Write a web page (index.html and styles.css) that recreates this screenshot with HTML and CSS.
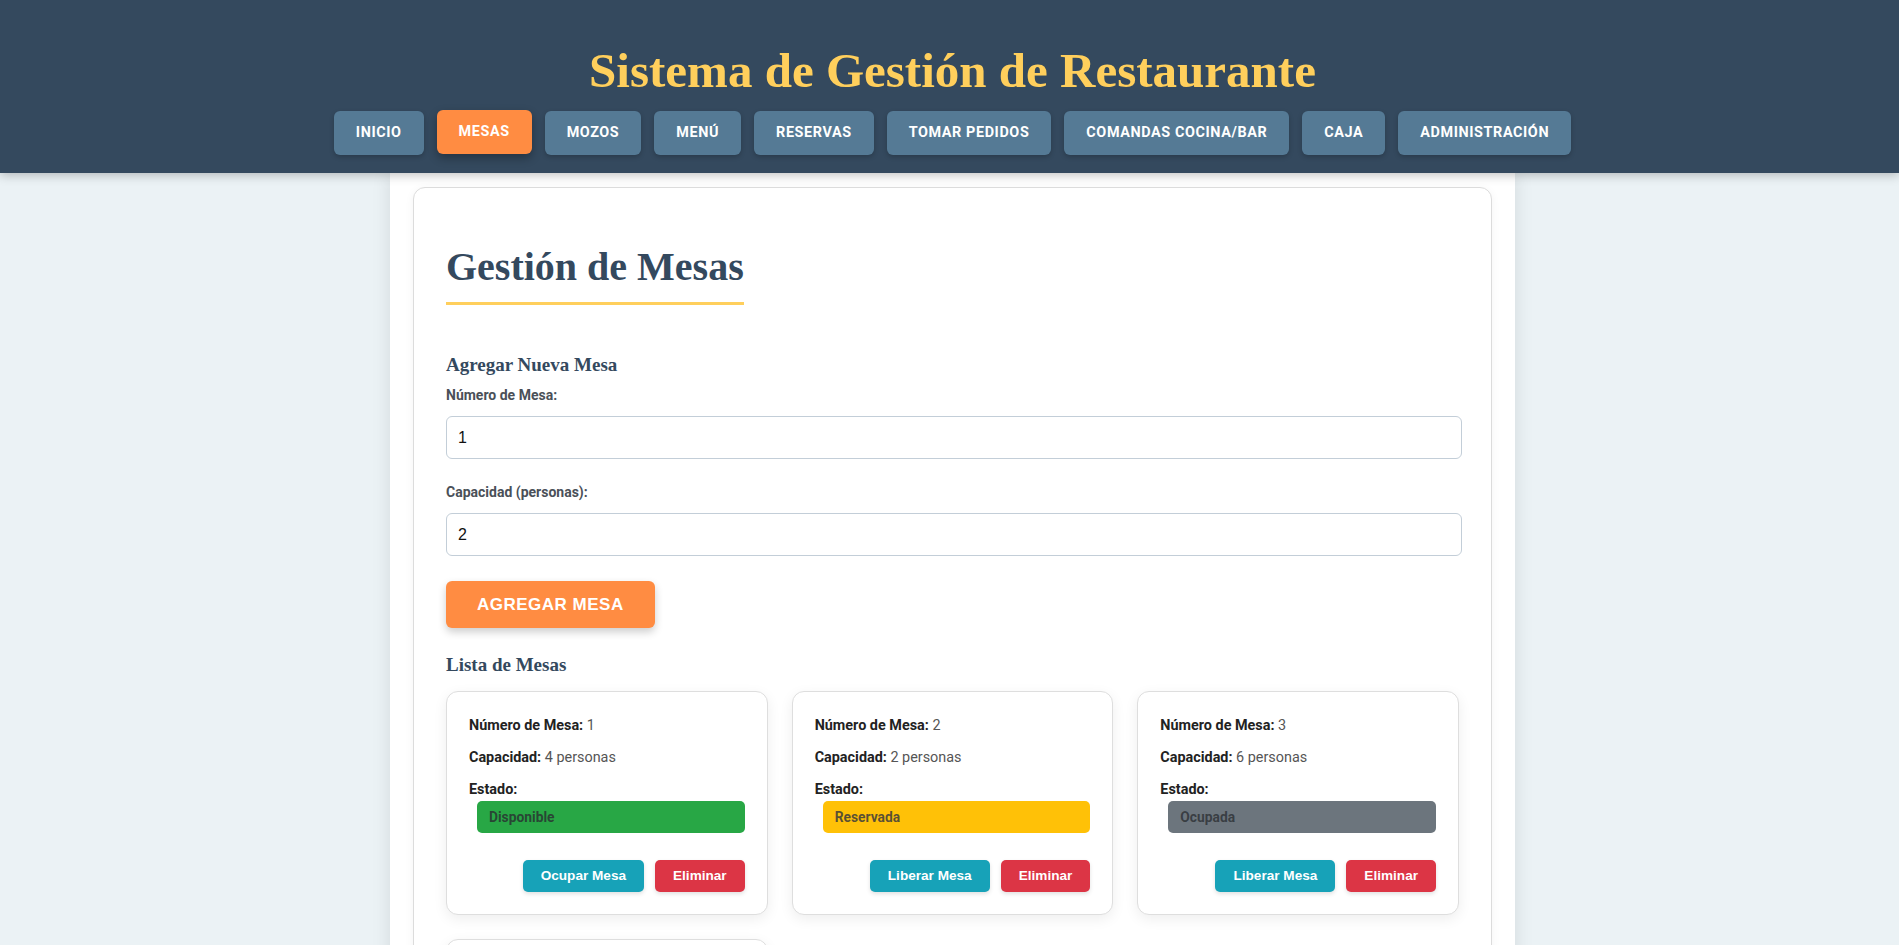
FILE: index.html
```html
<!DOCTYPE html>
<html lang="es">
<head>
<meta charset="utf-8">
<title>Sistema de Gestión de Restaurante</title>
<link rel="stylesheet" href="styles.css">
</head>
<body>
<header class="site-header">
  <h1 class="site-title">Sistema de Gestión de Restaurante</h1>
  <nav class="main-nav">
    <a class="nav-btn" href="#">Inicio</a>
    <a class="nav-btn active" href="#">Mesas</a>
    <a class="nav-btn" href="#">Mozos</a>
    <a class="nav-btn" href="#">Menú</a>
    <a class="nav-btn" href="#">Reservas</a>
    <a class="nav-btn" href="#">Tomar Pedidos</a>
    <a class="nav-btn" href="#">Comandas Cocina/Bar</a>
    <a class="nav-btn" href="#">Caja</a>
    <a class="nav-btn" href="#">Administración</a>
  </nav>
</header>
<div class="main-wrap">
  <main class="container">
    <section class="panel">
      <h2 class="page-title">Gestión de Mesas</h2>
      <h3 class="section-title">Agregar Nueva Mesa</h3>
      <form class="mesa-form">
        <div class="form-group">
          <label class="form-label" for="numero">Número de Mesa:</label>
          <input class="form-input" id="numero" type="number" value="1">
        </div>
        <div class="form-group">
          <label class="form-label" for="capacidad">Capacidad (personas):</label>
          <input class="form-input" id="capacidad" type="number" value="2">
        </div>
        <button class="btn-primary" type="button">Agregar Mesa</button>
      </form>
      <h3 class="section-title list-title">Lista de Mesas</h3>
      <div class="mesa-grid">
        <div class="mesa-card">
          <p class="mesa-line"><strong>Número de Mesa:</strong> 1</p>
          <p class="mesa-line"><strong>Capacidad:</strong> 4 personas</p>
          <div class="mesa-estado">
            <strong>Estado:</strong>
            <span class="badge badge-disponible">Disponible</span>
          </div>
          <div class="mesa-actions">
            <button class="btn btn-info" type="button">Ocupar Mesa</button>
            <button class="btn btn-danger" type="button">Eliminar</button>
          </div>
        </div>
        <div class="mesa-card">
          <p class="mesa-line"><strong>Número de Mesa:</strong> 2</p>
          <p class="mesa-line"><strong>Capacidad:</strong> 2 personas</p>
          <div class="mesa-estado">
            <strong>Estado:</strong>
            <span class="badge badge-reservada">Reservada</span>
          </div>
          <div class="mesa-actions">
            <button class="btn btn-info" type="button">Liberar Mesa</button>
            <button class="btn btn-danger" type="button">Eliminar</button>
          </div>
        </div>
        <div class="mesa-card">
          <p class="mesa-line"><strong>Número de Mesa:</strong> 3</p>
          <p class="mesa-line"><strong>Capacidad:</strong> 6 personas</p>
          <div class="mesa-estado">
            <strong>Estado:</strong>
            <span class="badge badge-ocupada">Ocupada</span>
          </div>
          <div class="mesa-actions">
            <button class="btn btn-info" type="button">Liberar Mesa</button>
            <button class="btn btn-danger" type="button">Eliminar</button>
          </div>
        </div>
        <div class="mesa-card">
          <p class="mesa-line"><strong>Número de Mesa:</strong> 4</p>
          <p class="mesa-line"><strong>Capacidad:</strong> 4 personas</p>
          <div class="mesa-estado">
            <strong>Estado:</strong>
            <span class="badge badge-disponible">Disponible</span>
          </div>
          <div class="mesa-actions">
            <button class="btn btn-info" type="button">Ocupar Mesa</button>
            <button class="btn btn-danger" type="button">Eliminar</button>
          </div>
        </div>
      </div>
    </section>
  </main>
</div>
</body>
</html>
```
FILE: styles.css
```css
* { box-sizing: border-box; }

html, body {
  margin: 0;
  padding: 0;
}

body {
  background: #ebf2f5;
  font-family: Roboto, "Liberation Sans", Arial, sans-serif;
  color: #333;
}

.site-header {
  position: relative;
  z-index: 2;
  background: #34495e;
  padding: 42px 0 18px 6px;
  box-shadow: 0 2px 10px rgba(0, 0, 0, 0.25);
  text-align: center;
}

.site-title {
  margin: 0;
  font-family: "Liberation Serif", "Times New Roman", serif;
  font-weight: bold;
  font-size: 49px;
  line-height: normal;
  color: #ffcf5c;
}

.main-nav {
  margin-top: 12px;
  display: flex;
  justify-content: center;
  gap: 13px;
}

.nav-btn {
  display: block;
  background: #557a95;
  color: #fff;
  text-decoration: none;
  text-transform: uppercase;
  font-family: Roboto, "Liberation Sans", sans-serif;
  font-weight: bold;
  font-size: 14.4px;
  letter-spacing: 0.6px;
  line-height: 16px;
  padding: 14px 22px;
  border-radius: 6px;
  box-shadow: 0 2px 5px rgba(0, 0, 0, 0.2);
}

.nav-btn.active {
  background: #ff8c42;
  transform: translateY(-1px);
  box-shadow: 0 4px 10px rgba(0, 0, 0, 0.3);
}

.main-wrap {
  padding-left: 6px;
}

.container {
  width: 1125px;
  margin: 0 auto;
  background: #fff;
  padding: 14px 23px 40px;
  box-shadow: 0 0 18px rgba(0, 0, 0, 0.1);
  min-height: 900px;
}

.panel {
  background: #fff;
  border: 1px solid #dcdcdc;
  border-radius: 12px;
  padding: 32px;
  box-shadow: 0 2px 10px rgba(0, 0, 0, 0.05);
}

.page-title {
  width: fit-content;
  margin: 23px 0 49px;
  font-family: "Liberation Serif", "Times New Roman", serif;
  font-weight: bold;
  font-size: 40px;
  line-height: normal;
  color: #34495e;
  padding-bottom: 12px;
  border-bottom: 3px solid #ffcf5c;
}

.section-title {
  margin: 0 0 11px;
  font-family: "Liberation Serif", "Times New Roman", serif;
  font-weight: bold;
  font-size: 19px;
  line-height: normal;
  color: #34495e;
}

.list-title {
  margin-top: 26px;
  margin-bottom: 15px;
}

.form-group {
  margin-bottom: 25px;
}

.form-label {
  display: block;
  margin-bottom: 13px;
  font-family: Roboto, sans-serif;
  font-weight: bold;
  font-size: 14px;
  color: #4a5058;
}

.form-input {
  display: block;
  width: calc(100% + 3px);
  height: 43px;
  padding: 0 11px;
  border: 1px solid #c3ced8;
  border-radius: 6px;
  font-family: "Liberation Sans", Arial, sans-serif;
  font-size: 16px;
  color: #111;
  background: #fff;
  -moz-appearance: textfield;
}

.form-input::-webkit-outer-spin-button,
.form-input::-webkit-inner-spin-button {
  -webkit-appearance: none;
  margin: 0;
}

.btn-primary {
  display: block;
  border: none;
  background: #ff8c42;
  color: #fff;
  font-family: "Liberation Sans", Arial, sans-serif;
  font-weight: bold;
  font-size: 17px;
  letter-spacing: 0.5px;
  line-height: 19px;
  text-transform: uppercase;
  padding: 14px 31px;
  border-radius: 6px;
  box-shadow: 0 4px 9px rgba(0, 0, 0, 0.2);
  cursor: pointer;
}

.mesa-grid {
  display: grid;
  grid-template-columns: repeat(3, 1fr);
  gap: 24px;
}

.mesa-card {
  background: #fff;
  border: 1px solid #dedede;
  border-radius: 12px;
  padding: 22px;
  box-shadow: 0 4px 14px rgba(0, 0, 0, 0.07);
}

.mesa-line {
  margin: 0 0 9px;
  font-size: 14.4px;
  line-height: 23px;
  color: #555;
}

.mesa-line strong,
.mesa-estado strong {
  color: #222;
}

.mesa-estado {
  font-size: 14.4px;
  line-height: 23px;
}

.mesa-estado strong {
  display: block;
}

.badge {
  display: block;
  margin-left: 8px;
  padding: 8px 12px;
  border-radius: 5px;
  font-family: Roboto, sans-serif;
  font-weight: bold;
  font-size: 13.8px;
  line-height: 16px;
  color: rgba(40, 44, 48, 0.8);
}

.badge-disponible { background: #28a745; }
.badge-reservada { background: #ffc107; color: rgba(60, 60, 60, 0.85); }
.badge-ocupada { background: #6c757d; color: rgba(40, 44, 48, 0.75); }

.mesa-actions {
  margin-top: 27px;
  display: flex;
  justify-content: flex-end;
  gap: 11px;
}

.btn {
  border: none;
  color: #fff;
  font-family: "Liberation Sans", Arial, sans-serif;
  font-weight: bold;
  font-size: 13.6px;
  line-height: 16px;
  padding: 8px 18px;
  border-radius: 5px;
  box-shadow: 0 2px 4px rgba(0, 0, 0, 0.12);
  cursor: pointer;
}

.btn-info { background: #17a2b8; }
.btn-danger { background: #dc3545; }
```
